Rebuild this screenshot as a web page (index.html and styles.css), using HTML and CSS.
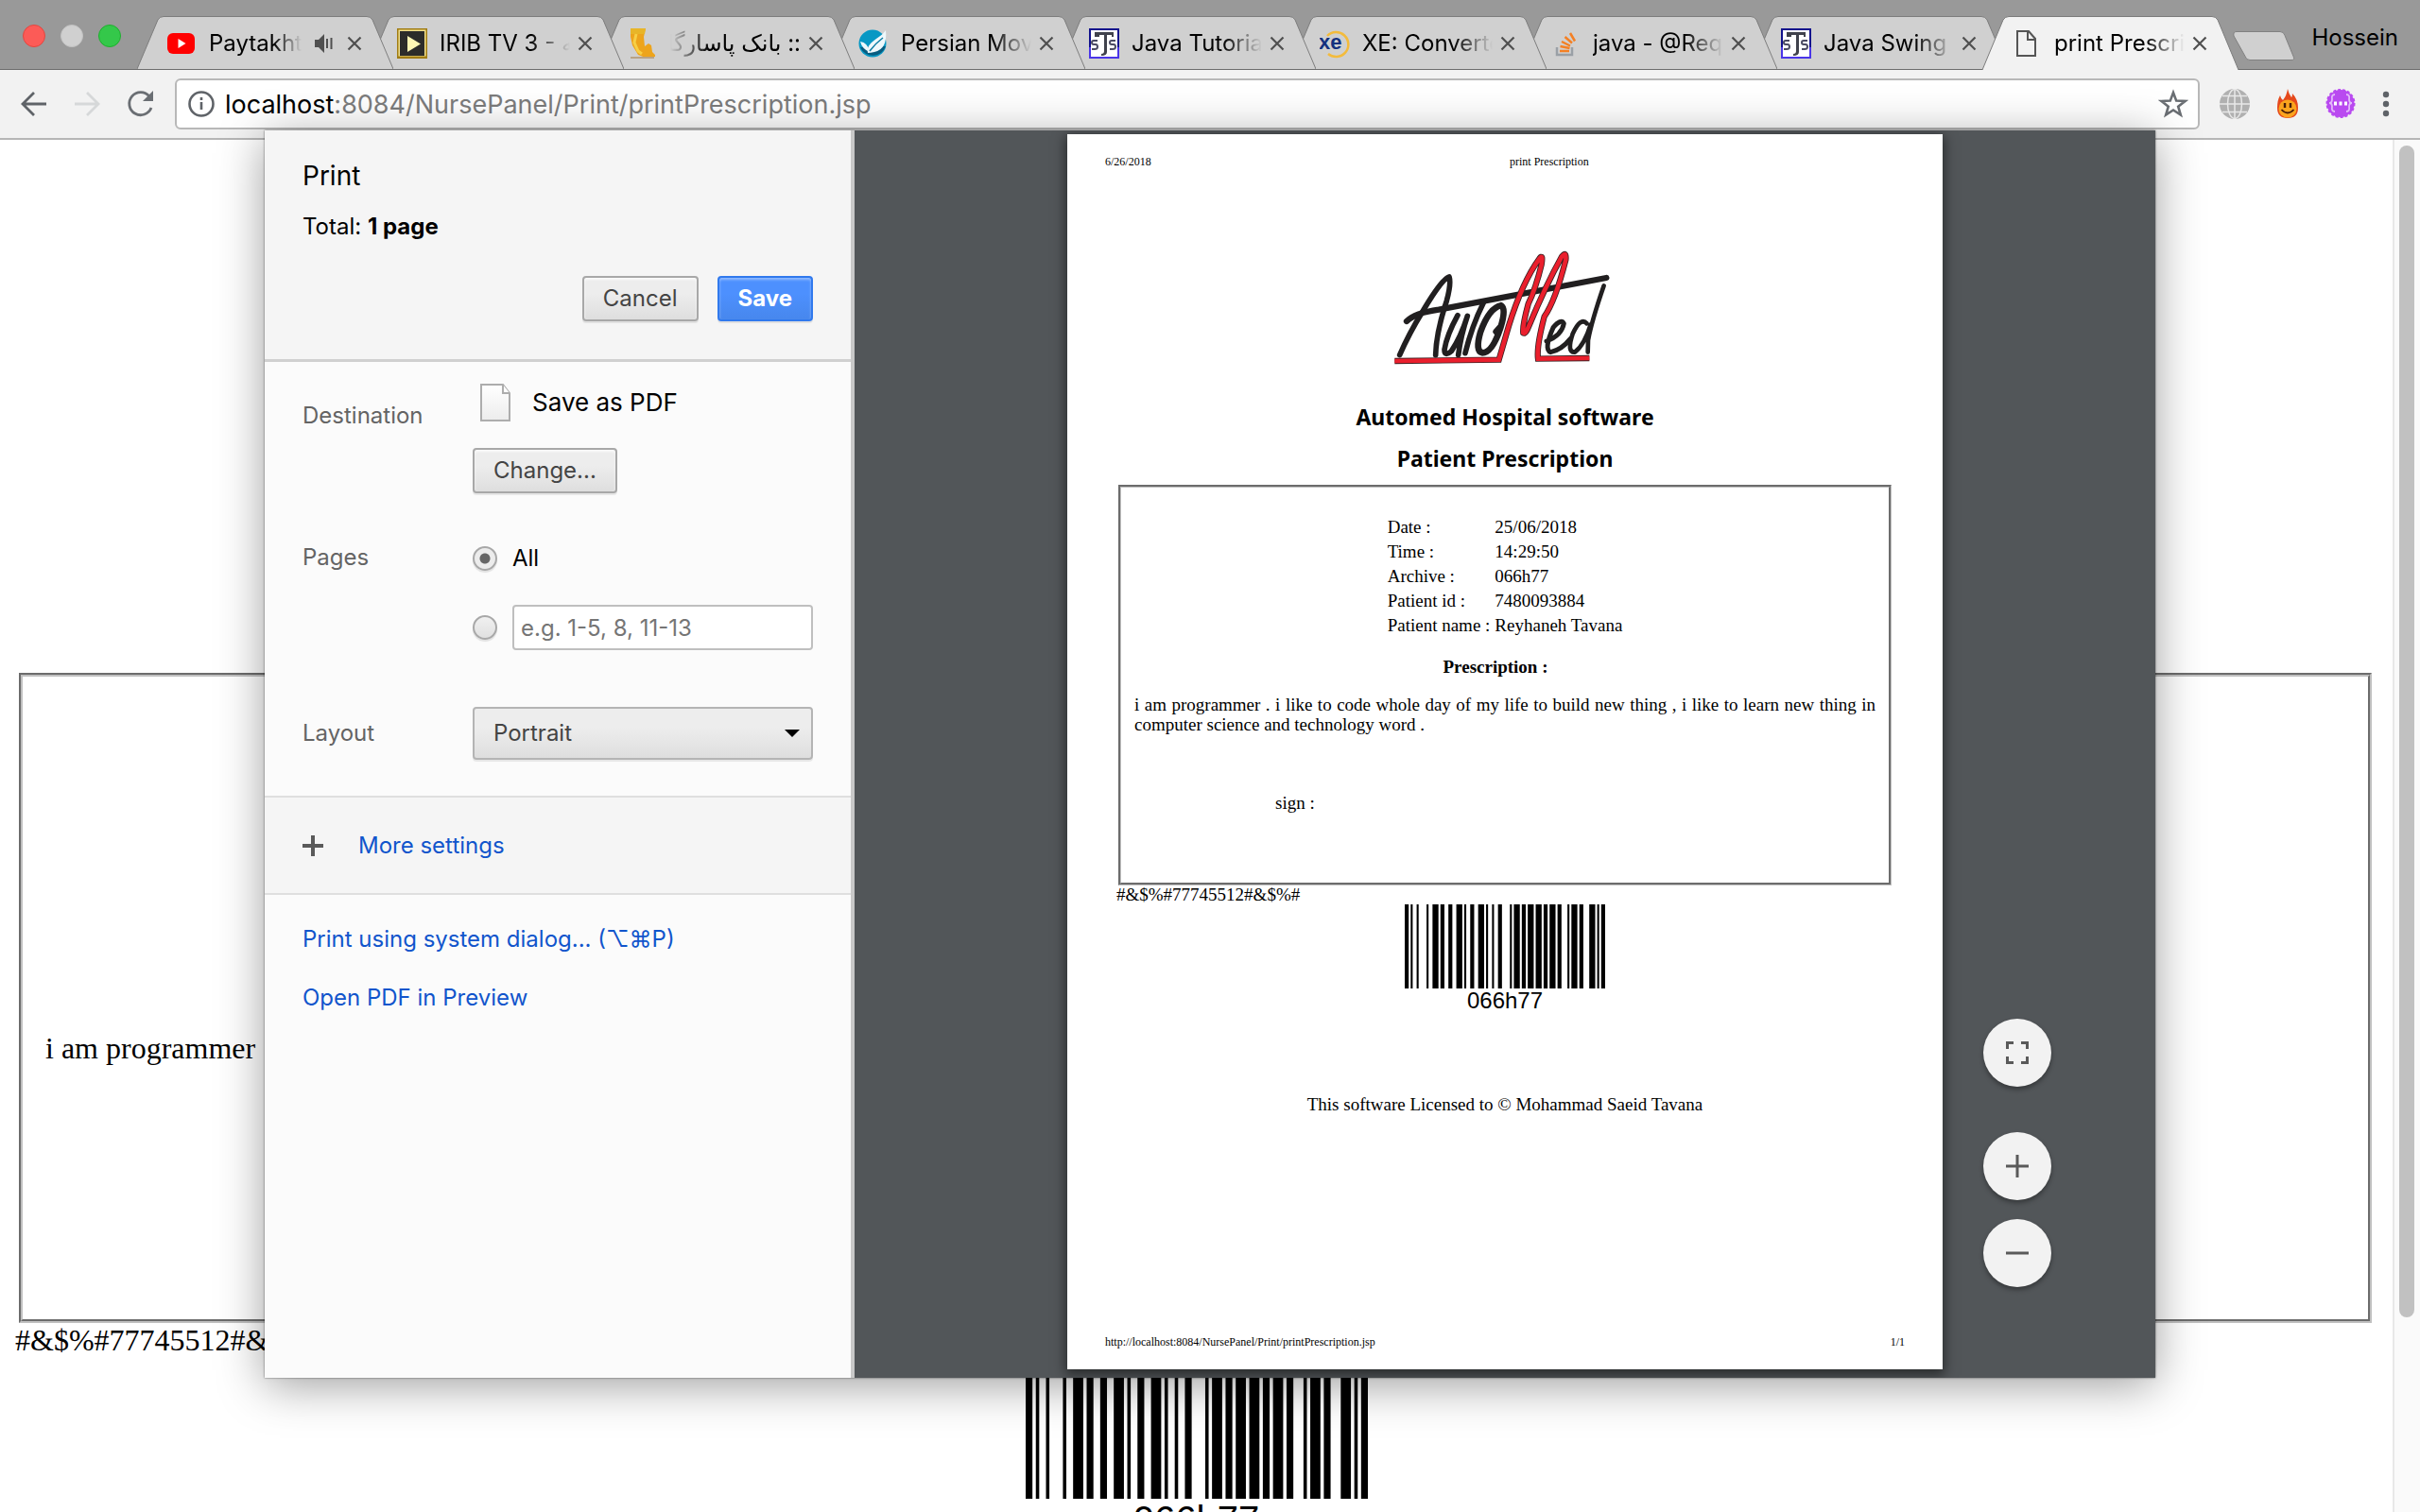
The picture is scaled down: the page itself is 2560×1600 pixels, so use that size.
FILE: index.html
```html
<!DOCTYPE html>
<html lang="en">
<head>
<meta charset="utf-8">
<title>print Prescription</title>
<link rel="stylesheet" href="styles.css">
</head>
<body>
<svg class="defs" aria-hidden="true">
  <symbol id="tab-shape" viewBox="0 0 271 57" preserveAspectRatio="none"><path d="M0 57L22 4Q24 .5 28 .5H243Q247 .5 249 4L271 57"/></symbol>
  <symbol id="close" viewBox="0 0 16 16"><path d="M1.500 1.500l13 13M14.500 1.500l-13 13" fill="none" stroke="#505050" stroke-width="2.200"/></symbol>
  <symbol id="java-fav" viewBox="0 0 32 32">
    <path d="M0 0h32v32H0z" fill="#12128c"/><path d="M0 20h32v12H0z" fill="#4a35e8"/><path d="M2 2h28v28H2z" fill="#fff"/>
    <path d="M6 4h20v5h-2V7h-5v18q0 4-6 4v-2q3 0 3-3V7h-5v2H6z" fill="#40424c"/>
    <path d="M9 13H5q-2 0-2 2t2 2h2q2 0 2 2.500T6 22H3M28 13h-4q-2 0-2 2t2 2h2q2 0 2 2.500T25 22h-3" fill="none" stroke="#4b4b63" stroke-width="2"/>
  </symbol>
  <symbol id="barcode" viewBox="0 0 101 40" preserveAspectRatio="none"><path d="M0 0h2v40h-2zM3 0h1v40h-1zM6 0h1v40h-1zM11 0h1v40h-1zM14 0h3v40h-3zM18 0h2v40h-2zM22 0h2v40h-2zM26 0h3v40h-3zM30 0h1v40h-1zM33 0h2v40h-2zM37 0h3v40h-3zM41 0h1v40h-1zM44 0h1v40h-1zM47 0h2v40h-2zM53 0h1v40h-1zM55 0h3v40h-3zM59 0h2v40h-2zM62 0h3v40h-3zM66 0h3v40h-3zM70 0h2v40h-2zM73 0h3v40h-3zM77 0h2v40h-2zM82 0h1v40h-1zM84 0h3v40h-3zM88 0h2v40h-2zM93 0h3v40h-3zM97 0h1v40h-1zM99 0h2v40h-2z"/></symbol>
</svg>

<header class="tabstrip">
  <div class="lights"><span class="light red"></span><span class="light grey"></span><span class="light green"></span></div>
  <nav class="tabs">
    <div class="tab"><svg class="tab-bg"><use href="#tab-shape"/></svg>
      <svg class="fav" viewBox="0 0 32 32"><rect x="1" y="5" width="29" height="22" rx="6" fill="#f00"/><path d="M12.500 11v10l8-5z" fill="#fff"/></svg>
      <span class="tab-title">Paytakht</span>
      <svg class="speaker" viewBox="0 0 20 20"><path d="M0 6h4l6-6v20l-6-6H0z" fill="#505050"/><path d="M13 5v10M17.500 4v12" stroke="#505050" stroke-width="2"/></svg>
      <button class="tab-close" aria-label="Close tab"><svg><use href="#close"/></svg></button></div>
    <div class="tab"><svg class="tab-bg"><use href="#tab-shape"/></svg>
      <svg class="fav" viewBox="0 0 32 32"><path d="M0 0h32v32H0z" fill="#a07c14"/><path d="M1.500 1.500h29v28h-29z" fill="#f2e08c"/><path d="M3 3h26v26H3z" fill="#2c2c2a"/><path d="M11 8v17l14-8.500z" fill="#fdf6b4"/></svg>
      <span class="tab-title">IRIB TV 3 - شبکه سه</span>
      <button class="tab-close" aria-label="Close tab"><svg><use href="#close"/></svg></button></div>
    <div class="tab"><svg class="tab-bg"><use href="#tab-shape"/></svg>
      <svg class="fav" viewBox="0 0 32 32"><path d="M3 0h16l-2 9 1 10 4-3 3 2 1 7 3 3v2l-10 1-8-3-6-10-2-9z" fill="#eda41c"/><path d="M3 0h16l-1 6H3z" fill="#e8b528"/><path d="M9 6l-2 9 4 9 4 3" fill="none" stroke="#f7cf45" stroke-width="3"/><path d="M3 31h25" stroke="#b9a284" stroke-width="2"/></svg>
      <span class="tab-title rtl" dir="rtl">:: بانک پاسارگاد ::</span>
      <button class="tab-close" aria-label="Close tab"><svg><use href="#close"/></svg></button></div>
    <div class="tab"><svg class="tab-bg"><use href="#tab-shape"/></svg>
      <svg class="fav" viewBox="0 0 32 32"><circle cx="15" cy="16" r="14.500" fill="#0898c4"/><path d="M2 20a14.500 14.500 0 0 0 27-1z" fill="#075c80"/><path d="M10 26C8 14 22 12 29 2q2 20-12 23-4 1-7 1z" fill="#eef8fb"/><path d="M12 25q-8-3-10-11 8 1 10 11z" fill="#eef8fb"/><path d="M12 24Q18 16 26 10" fill="none" stroke="#0a7ca3" stroke-width="1.500"/></svg>
      <span class="tab-title">Persian Movie</span>
      <button class="tab-close" aria-label="Close tab"><svg><use href="#close"/></svg></button></div>
    <div class="tab"><svg class="tab-bg"><use href="#tab-shape"/></svg>
      <svg class="fav"><use href="#java-fav"/></svg>
      <span class="tab-title">Java Tutorial</span>
      <button class="tab-close" aria-label="Close tab"><svg><use href="#close"/></svg></button></div>
    <div class="tab"><svg class="tab-bg"><use href="#tab-shape"/></svg>
      <svg class="fav" viewBox="0 0 32 32"><path d="M8 8A13 13 0 1 1 9 27" fill="none" stroke="#f3bb3c" stroke-width="2.500"/><text x="-1" y="22" class="xe">xe</text></svg>
      <span class="tab-title">XE: Converter</span>
      <button class="tab-close" aria-label="Close tab"><svg><use href="#close"/></svg></button></div>
    <div class="tab"><svg class="tab-bg"><use href="#tab-shape"/></svg>
      <svg class="fav" viewBox="0 0 32 32"><path d="M7 20v8h16v-8" fill="none" stroke="#9aa0a6" stroke-width="2.500"/><path d="M10 24h10M10.500 19l10 2M12 14l9 4.500M15.500 9l7.500 6.500M21 5l5 8.500" stroke="#f48024" stroke-width="2.500"/></svg>
      <span class="tab-title">java - @Request</span>
      <button class="tab-close" aria-label="Close tab"><svg><use href="#close"/></svg></button></div>
    <div class="tab"><svg class="tab-bg"><use href="#tab-shape"/></svg>
      <svg class="fav"><use href="#java-fav"/></svg>
      <span class="tab-title">Java Swing Tutorial</span>
      <button class="tab-close" aria-label="Close tab"><svg><use href="#close"/></svg></button></div>
    <div class="tab active"><svg class="tab-bg"><use href="#tab-shape"/></svg>
      <svg class="fav" viewBox="0 0 32 32"><path d="M6 3h12l7 8v18H6zM17 3v9h8" fill="none" stroke="#555" stroke-width="2"/></svg>
      <span class="tab-title">print Prescription</span>
      <button class="tab-close" aria-label="Close tab"><svg><use href="#close"/></svg></button></div>
    <button class="new-tab" aria-label="New tab"><svg viewBox="0 0 66 32"><path d="M4 .5h46q4 0 5 4l9 22q2 4-2 4H18q-4 0-5-4L1 5Q0 .5 4 .5z" fill="#d0d0d0" stroke="#808080"/></svg></button>
  </nav>
  <span class="profile">Hossein</span>
</header>

<div class="toolbar">
  <button class="nav-btn" aria-label="Back"><svg viewBox="0 0 32 32"><path d="M30 16H5M17 4L5 16l12 12" fill="none" stroke="#5f6368" stroke-width="2.800"/></svg></button>
  <button class="nav-btn" aria-label="Forward"><svg viewBox="0 0 32 32"><path d="M3 16h25M16 4l12 12-12 12" fill="none" stroke="#d6d8d9" stroke-width="2.800"/></svg></button>
  <button class="nav-btn" aria-label="Reload"><svg viewBox="0 0 32 32"><path d="M27 20A12 12 0 1 1 25 8" fill="none" stroke="#6a6e73" stroke-width="2.800"/><path d="M29 2v11H18z" fill="#6a6e73"/></svg></button>
  <div class="omnibox">
    <svg class="info" viewBox="0 0 28 28"><circle cx="14" cy="14" r="12.500" fill="none" stroke="#5f6368" stroke-width="2.600"/><path d="M14 12v8M14 7v3" stroke="#5f6368" stroke-width="2.600"/></svg>
    <span class="url">localhost<span class="url-rest">:8084/NursePanel/Print/printPrescription.jsp</span></span>
    <svg class="star" viewBox="0 0 32 32"><path d="M16 4l3.200 8.600 9.300.4-7.300 5.700 2.600 8.900L16 22.500l-7.800 5.100 2.600-8.900L3.500 13l9.300-.4z" fill="none" stroke="#6a6e73" stroke-width="2.600"/></svg>
  </div>
  <div class="extensions">
    <svg viewBox="0 0 32 32"><circle cx="16" cy="16" r="16" fill="#b0b0b0"/><g fill="none" stroke="#e8e8e8" stroke-width="1.500"><ellipse cx="16" cy="16" rx="7.500" ry="15.500"/><path d="M16 0v32M0 16h32M3 7.500h26M3 24.500h26"/></g></svg>
    <svg viewBox="0 0 32 32"><path d="M16 0q1 5 4 9 1-1 1-4 6 6 6 15 0 11-11 11T5 20q0-8 3-13 1 4 3 5 4-5 5-12z" fill="#e5491c"/><circle cx="16" cy="21" r="9.500" fill="#fba41d"/><path d="M13 15v5M19 15v5" stroke="#4a1d08" stroke-width="2.400"/><path d="M9.500 22q6.500 7 13 0" fill="none" stroke="#4a1d08" stroke-width="1.800"/></svg>
    <svg viewBox="0 0 32 32"><circle cx="16" cy="15.500" r="14.500" fill="#b94af0" stroke="#b94af0" stroke-width="2" stroke-dasharray="3 2"/><path d="M10 6q-4 0-3 5 0 4-3 4 3 0 3 4-1 5 3 5M22 6q4 0 3 5 0 4 3 4-3 0-3 4 1 5-3 5" fill="none" stroke="#e3b8fa" stroke-width="1.800"/><path d="M9 13.500h3v4H9zM14.500 13.500h3v4h-3zM20 13.500h3v4h-3z" fill="#fff"/></svg>
    <svg class="dots" viewBox="0 0 8 32"><g fill="#5f6368"><circle cx="4" cy="6" r="3.200"/><circle cx="4" cy="16" r="3.200"/><circle cx="4" cy="26" r="3.200"/></g></svg>
  </div>
</div>

<div class="viewport">
  <main class="web-page">
    <section class="record"><p>i am programmer</p></section>
    <p class="code">#&amp;$%#77745512#&amp;$%#</p>
    <div class="code-block"><svg class="bars"><use href="#barcode"/></svg><span>066h77</span></div>
  </main>
  <div class="scrollbar"><div class="thumb"></div></div>
</div>

<div class="dialog" role="dialog" aria-label="Print">
  <form class="settings">
    <div class="settings-head">
      <h1>Print</h1>
      <p>Total: <b>1 page</b></p>
      <div class="actions"><button type="button" class="btn">Cancel</button><button type="button" class="btn primary">Save</button></div>
    </div>
    <div class="options">
      <div class="option destination">
        <span class="label">Destination</span>
        <div>
          <div class="printer"><svg viewBox="0 0 36 42"><defs><linearGradient id="sheet" x2="0" y2="1"><stop stop-color="#fff"/><stop offset="1" stop-color="#ececec"/></linearGradient></defs><path d="M3 2h23l7 9v29H3z" fill="url(#sheet)" stroke="#adadad" stroke-width="2"/><path d="M26 2v9h7" fill="#fff" stroke="#adadad" stroke-width="2"/></svg>Save as PDF</div>
          <button type="button" class="btn">Change...</button>
        </div>
      </div>
      <div class="option pages">
        <span class="label">Pages</span>
        <div>
          <div class="radio-row"><input type="radio" name="pages" id="all" checked><label for="all">All</label></div>
          <div class="radio-row"><input type="radio" name="pages" id="range" aria-label="Page range"><input type="text" aria-label="Pages to print" placeholder="e.g. 1-5, 8, 11-13"></div>
        </div>
      </div>
      <div class="option layout">
        <label class="label" for="layout">Layout</label>
        <div class="select"><select id="layout"><option>Portrait</option><option>Landscape</option></select></div>
      </div>
    </div>
    <div class="more"><svg viewBox="0 0 22 22"><path d="M11 0v22M0 11h22" stroke="#5a5a5a" stroke-width="4"/></svg><a href="#">More settings</a></div>
    <div class="links"><a href="#">Print using system dialog... (⌥⌘P)</a><a href="#">Open PDF in Preview</a></div>
  </form>

  <div class="preview">
    <article class="sheet">
      <header class="sheet-head"><span>6/26/2018</span><span>print Prescription</span></header>
      <svg class="logo" viewBox="0 0 780 420" role="img" aria-label="AutoMed">
        <g fill="none" stroke="#211f20" stroke-linecap="round" stroke-linejoin="round">
          <path d="M56 362Q85 295 128 225Q190 120 213 114Q220 135 205 190Q172 290 170 362" stroke-width="17"/>
          <path d="M78 255Q105 228 180 218L712 117" stroke-width="19"/>
          <path d="M240 236Q205 300 198 345Q198 368 220 350Q250 305 271 238Q250 300 242 362" stroke-width="17"/>
          <path d="M322 196Q285 270 264 356" stroke-width="17"/>
          <path d="M378 205Q395 215 376 275Q350 355 318 355Q295 350 312 290Q340 212 378 205M376 272L362 288" stroke-width="20"/>
          <path d="M522 318Q570 300 577 262Q568 245 543 275Q512 345 535 353Q570 345 598 310" stroke-width="15"/>
          <path d="M650 262Q630 240 605 295Q585 355 612 353Q642 330 662 265M704 142Q665 255 654 315L653 353" stroke-width="14"/>
        </g>
        <path d="M40 381L371 377L402 270Q445 130 500 55Q512 40 506 75Q488 150 464 200Q445 270 448 292Q455 298 466 270Q520 140 570 50Q586 30 583 60Q550 190 515 240Q490 335 495 374L658 372" fill="none" stroke="#3a2022" stroke-width="19"/>
        <path d="M40 381L371 377L402 270Q445 130 500 55Q512 40 506 75Q488 150 464 200Q445 270 448 292Q455 298 466 270Q520 140 570 50Q586 30 583 60Q550 190 515 240Q490 335 495 374L658 372" fill="none" stroke="#ea1f2d" stroke-width="14"/>
      </svg>
      <h2>Automed Hospital software</h2>
      <h2>Patient Prescription</h2>
      <section class="prescription">
        <table>
          <tr><th scope="row">Date :</th><td>25/06/2018</td></tr>
          <tr><th scope="row">Time :</th><td>14:29:50</td></tr>
          <tr><th scope="row">Archive :</th><td>066h77</td></tr>
          <tr><th scope="row">Patient id :</th><td>7480093884</td></tr>
          <tr><th scope="row">Patient name :</th><td>Reyhaneh Tavana</td></tr>
        </table>
        <h3>Prescription :</h3>
        <p class="body-text">i am programmer . i like to code whole day of my life to build new thing , i like to learn new thing in computer science and technology word .</p>
        <p class="sign">sign :</p>
      </section>
      <p class="sheet-code">#&amp;$%#77745512#&amp;$%#</p>
      <div class="code-block small"><svg class="bars"><use href="#barcode"/></svg><span>066h77</span></div>
      <p class="license">This software Licensed to © Mohammad Saeid Tavana</p>
      <footer class="sheet-foot"><span>http://localhost:8084/NursePanel/Print/printPrescription.jsp</span><span>1/1</span></footer>
    </article>
    <div class="zoom-controls">
      <button type="button" aria-label="Fit to page"><svg viewBox="0 0 24 24"><path d="M1.500 8V1.500H8M16 1.500h6.500V8M22.500 16v6.500H16M8 22.500H1.500V16" fill="none" stroke="#5a5a5a" stroke-width="3"/></svg></button>
      <button type="button" aria-label="Zoom in"><svg viewBox="0 0 24 24"><path d="M12 0v24M0 12h24" stroke="#5a5a5a" stroke-width="3"/></svg></button>
      <button type="button" aria-label="Zoom out"><svg viewBox="0 0 24 24"><path d="M0 12h24" stroke="#5a5a5a" stroke-width="3"/></svg></button>
    </div>
  </div>
</div>
</body>
</html>
```
FILE: styles.css
```css
* { box-sizing: border-box; }
body, h1, h2, h3, p { margin: 0; }
body {
  display: flex;
  flex-direction: column;
  height: 100vh;
  overflow: hidden;
  position: relative;
  background: #fff;
  font: 24px/32px Inter, "DejaVu Sans", sans-serif;
  color: #000;
}
button { font: inherit; padding: 0; border: 0; background: none; }
svg { display: block; flex: none; }
.defs { position: absolute; width: 0; height: 0; }

/* Tab strip */
.tabstrip {
  display: flex;
  height: 74px;
  flex: none;
  background: #999;
  border-bottom: 1px solid #6c6c6c;
}
.lights { display: flex; flex: none; gap: 16px; padding: 26px 17px 0 24px; }
.light { width: 24px; height: 24px; border-radius: 50%; }
.red { background: #fc5b57; border: 1px solid #e2463f; }
.grey { background: #d0d0d0; border: 1px solid #c2c2c2; }
.green { background: #34c84a; border: 1px solid #1faf2e; }
.tabs { display: flex; flex: 1; min-width: 0; padding: 17px 0 0; }
.tab {
  position: relative;
  display: flex;
  align-items: center;
  flex: 0 1 271px;
  min-width: 0;
  height: 57px;
  padding: 0 33px 0 31px;
  margin-right: -27px;
}
.tab:nth-child(1) { z-index: 8; }
.tab:nth-child(2) { z-index: 7; }
.tab:nth-child(3) { z-index: 6; }
.tab:nth-child(4) { z-index: 5; }
.tab:nth-child(5) { z-index: 4; }
.tab:nth-child(6) { z-index: 3; }
.tab:nth-child(7) { z-index: 2; }
.tab:nth-child(8) { z-index: 1; }
.tab.active { z-index: 9; }
.tab-bg { position: absolute; inset: 0; width: 100%; height: 100%; z-index: -1; fill: #d0d0d0; stroke: #7c7c7c; }
.active .tab-bg { fill: #f2f2f2; }
.tab:not(.active) .tab-bg { height: 56px; }
.fav { width: 32px; height: 32px; margin-right: 13px; }
.xe { font: bold 22px "Liberation Sans", sans-serif; fill: #14307e; }
.tab-title {
  flex: 1;
  min-width: 0;
  overflow: hidden;
  white-space: nowrap;
  -webkit-mask-image: linear-gradient(to right, #000 70%, transparent);
  mask-image: linear-gradient(to right, #000 70%, transparent);
}
.tab-title.rtl {
  -webkit-mask-image: linear-gradient(to left, #000 70%, transparent);
  mask-image: linear-gradient(to left, #000 70%, transparent);
}
.speaker { width: 20px; height: 20px; margin-left: 14px; }
.tab-close { flex: none; width: 16px; height: 16px; margin-left: 8px; }
.speaker + .tab-close { margin-left: 14px; }
.tab-close svg { width: 16px; height: 16px; }
.new-tab { flex: none; width: 66px; height: 32px; margin: 16px 0 0 21px; }
.new-tab svg { width: 66px; height: 32px; }
.profile { flex: none; padding: 24px 23px 0 0; }

/* Toolbar */
.toolbar {
  display: flex;
  align-items: center;
  flex: none;
  height: 74px;
  padding: 0 32px 1px 19px;
  background: #f2f2f2;
  border-bottom: 2px solid #b6b6b6;
}
.nav-btn { width: 32px; height: 32px; margin-right: 25px; }
.nav-btn svg { width: 32px; height: 32px; }
.nav-btn:nth-child(3) { margin-right: 20px; }
.omnibox {
  display: flex;
  align-items: center;
  flex: 1;
  height: 54px;
  padding: 0 10px 0 12px;
  border: 2px solid #b8b8b8;
  border-radius: 6px;
  background: #fff;
}
.info { width: 28px; height: 28px; margin-right: 11px; }
.url { flex: 1; padding-top: 2px; font-size: 27px; }
.url-rest { color: #7c7c7c; }
.star { width: 32px; height: 32px; }
.extensions { display: flex; gap: 24px; padding-left: 21px; }
.extensions svg { width: 32px; height: 32px; }
.extensions .dots { width: 8px; margin-left: 4px; }

/* Page behind the dialog */
.viewport { display: flex; flex: 1; min-height: 0; overflow: hidden; }
.web-page { flex: 1; overflow: hidden; padding-top: 564px; font: 32px/36px "Liberation Serif", serif; }
.record {
  height: 688px;
  margin: 0 22px 0 20px;
  padding: 375px 24px 0;
  border: 4px groove #c0c0c0;
}
.code { padding-left: 16px; }
.code-block { display: flex; flex-direction: column; align-items: center; font: 40px/44px "Liberation Sans", sans-serif; }
.code-block .bars { width: 362px; height: 150px; }
.scrollbar { width: 29px; padding: 6px 5px; border-left: 2px solid #e8e8e8; background: #fafafa; }
.thumb { width: 16px; height: 1240px; border-radius: 8px; background: #c1c1c1; }

/* Print dialog */
.dialog {
  position: absolute;
  z-index: 20;
  inset: 138px 280px 142px;
  display: flex;
  box-shadow: 0 8px 46px rgba(0, 0, 0, .38), 0 0 2px rgba(0, 0, 0, .6);
}
.settings { flex: 0 0 624px; min-width: 0; border-right: 4px solid #c8c8c8; background: #fbfbfb; }
.settings-head { padding: 32px 40px 40px; border-bottom: 3px solid #d0d0d0; background: #f5f5f5; }
h1 { margin-bottom: 22px; font-size: 28px; font-weight: 400; line-height: 32px; }
.actions { display: flex; justify-content: flex-end; gap: 20px; margin-top: 36px; }
.btn {
  height: 48px;
  padding: 0 20px;
  border: 2px solid #a8a8a8;
  border-radius: 4px;
  background: linear-gradient(#ededed 38%, #dedede);
  box-shadow: 0 2px 0 rgba(0, 0, 0, .08), inset 0 2px 3px rgba(255, 255, 255, .75);
  color: #444;
  line-height: 44px;
}
.btn.primary {
  border-color: #3079ed;
  background: linear-gradient(#4d90fe 38%, #4787ed);
  box-shadow: 0 2px 0 rgba(0, 0, 0, .08), inset 0 2px 3px rgba(255, 255, 255, .4);
  color: #fff;
  font-weight: 700;
}
.options { padding: 22px 40px 38px; }
.option { display: grid; grid-template-columns: 180px minmax(0, 1fr); }
.label { color: #646464; }
.destination .label { padding-top: 19px; }
.printer { display: flex; align-items: center; gap: 21px; height: 42px; margin-bottom: 27px; padding-left: 6px; font-size: 26px; }
.printer svg { width: 36px; height: 42px; }
.pages { margin-top: 52px; }
.radio-row { display: flex; align-items: center; gap: 16px; height: 34px; }
.radio-row + .radio-row { height: 48px; margin-top: 32px; }
input[type="radio"] {
  appearance: none;
  flex: none;
  width: 26px;
  height: 26px;
  margin: 0;
  border: 2px solid #a8a8a8;
  border-radius: 50%;
  background: linear-gradient(#f0f0f0, #e0e0e0);
  box-shadow: 0 2px 1px rgba(0, 0, 0, .1);
}
input[type="radio"]:checked { background: radial-gradient(circle, #666 5px, #ececec 6px); }
input[type="text"] {
  flex: 1;
  width: 100%;
  min-width: 0;
  height: 48px;
  padding: 0 7px;
  border: 2px solid #bfbfbf;
  border-radius: 4px;
  background: #fff;
  font: inherit;
}
input::placeholder { color: #757575; opacity: 1; }
.layout { align-items: center; margin-top: 60px; }
.select { display: grid; align-items: center; }
.select::after {
  content: "";
  grid-area: 1 / 1;
  justify-self: end;
  margin-right: 14px;
  border: 8px solid transparent;
  border-top-color: #000;
  border-bottom: 0;
  pointer-events: none;
}
select {
  appearance: none;
  grid-area: 1 / 1;
  height: 56px;
  padding: 0 20px;
  border: 2px solid #b4b4b4;
  border-radius: 4px;
  background: linear-gradient(#ededed 38%, #dedede);
  box-shadow: 0 2px 0 rgba(0, 0, 0, .08);
  color: #444;
  font: inherit;
}
.more { display: flex; align-items: center; gap: 37px; height: 105px; padding: 0 40px; border: 2px solid #dfdfdf; border-width: 2px 0; background: #f5f5f5; }
.more svg { width: 22px; height: 22px; }
a { color: #15c; text-decoration: none; }
.links { display: flex; flex-direction: column; align-items: flex-start; gap: 30px; padding: 31px 40px; }

/* Preview */
.preview { position: relative; display: flex; justify-content: center; flex: 1; min-width: 0; padding: 4px 0 9px; overflow: hidden; background: #525659; }
.sheet {
  display: flex;
  flex-direction: column;
  flex: none;
  width: 926px;
  padding: 21px 40px 21px;
  background: #fff;
  box-shadow: 0 4px 12px 2px rgba(0, 0, 0, .5);
  font: 19px/22px "Liberation Serif", serif;
}
.sheet-head { display: flex; font-size: 12px; line-height: 16px; }
.sheet-head span:first-child { flex: 0 0 428px; }
.logo { width: 260px; height: 140px; margin: 76px auto 30px; }
h2 { margin-bottom: 12px; font: bold 23px/32px "Noto Sans", sans-serif; text-align: center; }
.prescription { height: 424px; margin: 0 14px; padding: 29px 14px 0; border: 3px groove #c0c0c0; }
table { margin: 0 auto; border-spacing: 0; }
th, td { height: 26px; padding: 0; font-weight: 400; text-align: left; }
th { padding-right: 5px; }
h3 { margin: 20px 20px 18px 0; font-size: 19px; text-align: center; }
.body-text { line-height: 21px; text-align: justify; }
.sign { margin: 62px 0 0 149px; }
.sheet-code { padding-left: 12px; line-height: 20px; }
.code-block.small { font-size: 24px; line-height: 26px; }
.small .bars { width: 212px; height: 89px; }
.license { margin-top: 86px; text-align: center; }
.sheet-foot { display: flex; justify-content: space-between; margin-top: auto; font-size: 12px; line-height: 16px; }
.zoom-controls { position: absolute; right: 110px; bottom: 96px; display: flex; flex-direction: column; gap: 20px; }
.zoom-controls button {
  display: grid;
  place-items: center;
  width: 72px;
  height: 72px;
  border-radius: 50%;
  background: #f2f2f2;
  box-shadow: 0 3px 5px rgba(0, 0, 0, .35);
}
.zoom-controls button:first-child { margin-bottom: 28px; }
.zoom-controls svg { width: 24px; height: 24px; }
```
